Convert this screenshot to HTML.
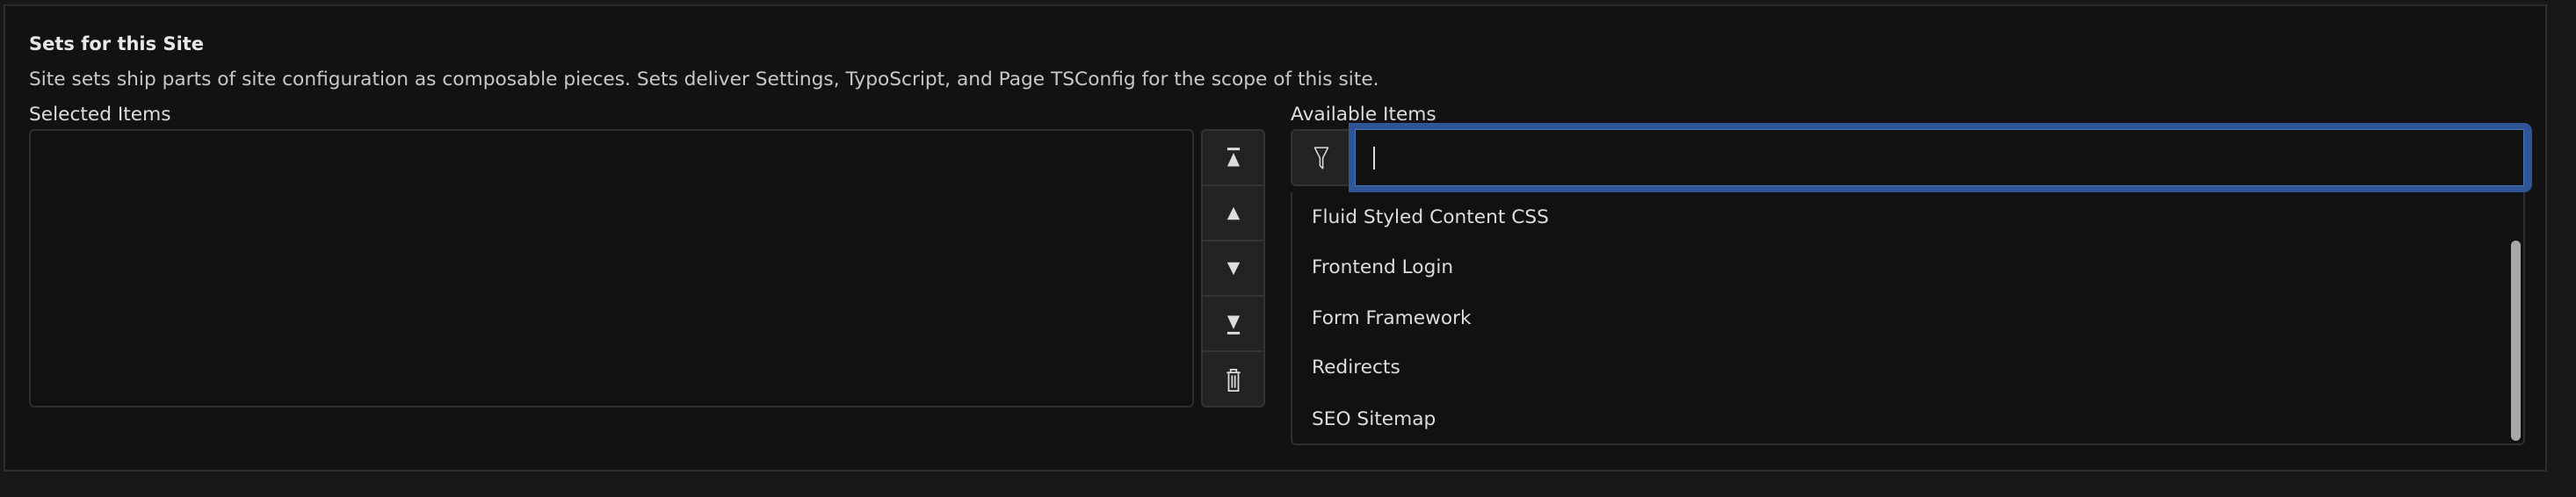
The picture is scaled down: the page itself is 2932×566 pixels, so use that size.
<!DOCTYPE html>
<html><head><meta charset="utf-8"><style>
*{box-sizing:border-box;margin:0;padding:0}
body{width:2932px;height:566px;background:#181818;font-family:"DejaVu Sans","Liberation Sans",sans-serif;color:#ddd;position:relative;overflow:hidden}
.panel{position:absolute;left:4px;top:5px;width:2895px;height:532px;background:#121212;border:2px solid #2e2e2e;border-top-color:#2a2a2a}
.abs{position:absolute}
.t{font-size:21.7px;white-space:nowrap;line-height:1}
.btns{left:1367px;top:147px;width:73px;height:317px;background:#222;border:2px solid #333;border-radius:6px;overflow:hidden}
.btns div{height:63px;border-bottom:2px solid #333;display:flex;align-items:center;justify-content:center}
.btns div:last-child{border-bottom:none}
</style></head><body>
<div class="panel"></div>
<div class="abs t" style="left:33px;top:40px;font-weight:bold;color:#e8e8e8;font-size:21px">Sets for this Site</div>
<div class="abs t" style="left:33px;top:80px;color:#c8c8c8">Site sets ship parts of site configuration as composable pieces. Sets deliver Settings, TypoScript, and Page TSConfig for the scope of this site.</div>
<div class="abs t" style="left:33px;top:120px">Selected Items</div>
<div class="abs" style="left:33px;top:147px;width:1326px;height:317px;border:2px solid #2e2e2e;border-radius:6px;background:#111"></div>
<div class="abs btns">
<div><svg width="24" height="26" viewBox="0 0 20 22"><rect x="4" y="1" width="12" height="2.5" fill="#ddd"/><path d="M10 6 L16 19 L4 19Z" fill="#ddd"/></svg></div>
<div><svg width="24" height="24" viewBox="0 0 20 20"><path d="M10 4 L16 16 L4 16Z" fill="#ddd"/></svg></div>
<div><svg width="24" height="24" viewBox="0 0 20 20"><path d="M10 16 L16 4 L4 4Z" fill="#ddd"/></svg></div>
<div><svg width="24" height="26" viewBox="0 0 20 22"><path d="M10 16 L16 3 L4 3Z" fill="#ddd"/><rect x="4" y="18.5" width="12" height="2.5" fill="#ddd"/></svg></div>
<div><svg width="22" height="30" viewBox="0 0 20 26"><path d="M3 5 H17 M7 5 V2 H13 V5 M5 5 V24 H15 V5 M8.5 8 V21 M11.5 8 V21" stroke="#ddd" stroke-width="1.6" fill="none"/></svg></div>
</div>
<div class="abs t" style="left:1469px;top:120px">Available Items</div>
<div class="abs" style="left:1469px;top:147px;width:70px;height:65px;background:#222;border:2px solid #333;border-radius:6px 0 0 6px;display:flex;align-items:center;justify-content:center"><svg width="20" height="28" viewBox="0 0 18 26"><path d="M2 2 H16 L10.5 13 V24 L7.5 21 V13 Z" stroke="#ddd" stroke-width="1.4" fill="none" stroke-linejoin="round"/></svg></div>
<div class="abs" style="left:1535px;top:140px;width:1347px;height:79px;background:#2f5596;border-radius:0 9px 9px 0"></div>
<div class="abs" style="left:1542px;top:147px;width:1331px;height:65px;background:#121212;border:1px solid #4a75c0"></div>
<div class="abs" style="left:1563px;top:167px;width:2px;height:26px;background:#ddd"></div>
<div class="abs" style="left:1469px;top:219px;width:1405px;height:288px;border:2px solid #2e2e2e;border-top:none;border-radius:0 0 6px 6px;background:#111"></div>
<div class="abs t" style="left:1493px;top:237px">Fluid Styled Content CSS</div>
<div class="abs t" style="left:1493px;top:294px">Frontend Login</div>
<div class="abs t" style="left:1493px;top:352px">Form Framework</div>
<div class="abs t" style="left:1493px;top:408px">Redirects</div>
<div class="abs t" style="left:1493px;top:467px">SEO Sitemap</div>
<div class="abs" style="left:2858px;top:274px;width:11px;height:228px;background:#a8a8a8;border-radius:6px"></div>
</body></html>
